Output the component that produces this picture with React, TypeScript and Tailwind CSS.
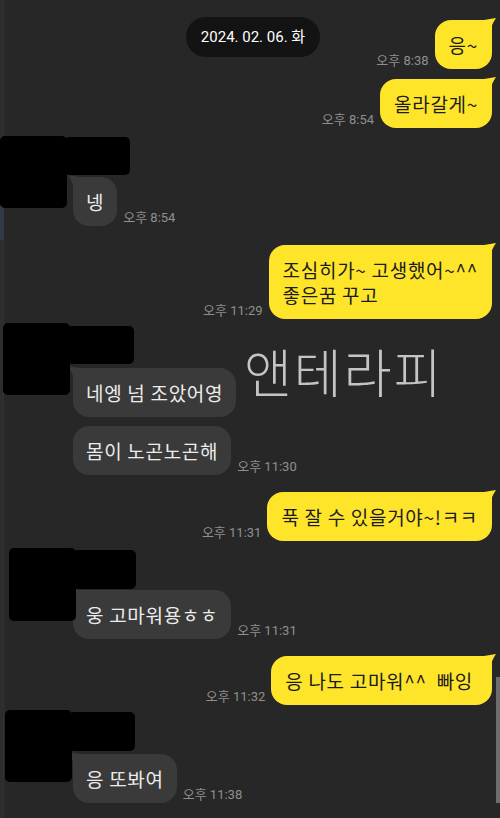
const FONT = { fontFamily: '"Noto Sans CJK KR", "Noto Sans", sans-serif' };
const TIME_FONT = { fontFamily: 'Roboto, "Noto Sans CJK KR", sans-serif' };

type Box = { x: number; y: number; w: number; h: number };

function MyTail() {
  return (
    <svg
      className="absolute -right-[4px] -top-[2px]"
      width="12"
      height="14"
      viewBox="0 0 12 14"
    >
      <path d="M0 2 L12 0 C9 4 7 9 6 14 L0 14 Z" fill="#fee52a" />
    </svg>
  );
}

function OtherTail() {
  return (
    <svg
      className="absolute -left-[5px] -top-[2px]"
      width="12"
      height="14"
      viewBox="0 0 12 14"
    >
      <path d="M12 2 L0 0 C3 4 5 9 6 14 L12 14 Z" fill="#3a3a3a" />
    </svg>
  );
}

function Time({ t }: { t: string }) {
  return (
    <span
      className="text-[13px] leading-none text-[#8f8f8f] pb-[2px] whitespace-nowrap"
      style={TIME_FONT}
    >
      {t}
    </span>
  );
}

function Mine({ lines, time, mt }: { lines: string[]; time: string; mt: string }) {
  return (
    <div className={`flex justify-end items-end gap-[6px] pr-[8px] ${mt}`}>
      <Time t={time} />
      <div className="relative rounded-[16px] rounded-tr-[6px] bg-[#fee52a] px-[14px] py-[12px] text-[19px] leading-[25px] tracking-[0.7px] text-[#1c1c1c]">
        <MyTail />
        {lines.map((l) => (
          <div key={l} className="relative whitespace-pre">
            {l}
          </div>
        ))}
      </div>
    </div>
  );
}

function Redact({ avatar, name }: { avatar: Box; name: Box }) {
  return (
    <>
      <div
        className="absolute bg-black rounded-[5px]"
        style={{ left: avatar.x, top: avatar.y, width: avatar.w, height: avatar.h }}
      />
      <div
        className="absolute bg-black rounded-[5px]"
        style={{ left: name.x, top: name.y, width: name.w, height: name.h }}
      />
    </>
  );
}

function Theirs({
  msgs,
  time,
  mt,
  avatar,
  name,
}: {
  msgs: string[];
  time: string;
  mt: string;
  avatar: Box;
  name: Box;
}) {
  return (
    <div className={`relative pl-[73px] pt-[41px] ${mt}`}>
      <div className="flex flex-col gap-[9px]">
        {msgs.map((m, i) => (
          <div key={m} className="flex items-end gap-[6px]">
            <div
              className={`relative rounded-[16px] bg-[#3a3a3a] px-[13px] py-[12px] text-[19px] leading-[25px] tracking-[0.7px] text-[#ececec] whitespace-pre ${
                i === 0 ? "rounded-tl-[6px]" : ""
              }`}
            >
              {i === 0 && <OtherTail />}
              <span className="relative">{m}</span>
            </div>
            {i === msgs.length - 1 && <Time t={time} />}
          </div>
        ))}
      </div>
      <Redact avatar={avatar} name={name} />
    </div>
  );
}

export default function App() {
  return (
    <div className="relative h-[818px] w-full overflow-hidden bg-[#272727]" style={FONT}>
      {/* left edge strip */}
      <div className="absolute left-0 top-0 h-full w-[4px] bg-[#2d2d2d] border-r border-[#323232]" />
      <div className="absolute left-0 top-[206px] h-[34px] w-[4px] bg-[#2f3a44]" />

      <div className="flex flex-col pt-[20px]">
        <Mine lines={["응~"]} time="오후 8:38" mt="" />
        <Mine lines={["올라갈게~"]} time="오후 8:54" mt="mt-[10px]" />
        <Theirs
          msgs={["넹"]}
          time="오후 8:54"
          mt="mt-[8px]"
          avatar={{ x: 0, y: 0, w: 67, h: 72 }}
          name={{ x: 64, y: 1, w: 66, h: 38 }}
        />
        <Mine
          lines={["조심히가~ 고생했어~^^", "좋은꿈 꾸고"]}
          time="오후 11:29"
          mt="mt-[19px]"
        />
        <Theirs
          msgs={["네엥 넘 조았어영", "몸이 노곤노곤해"]}
          time="오후 11:30"
          mt="mt-[8px]"
          avatar={{ x: 3, y: -4, w: 67, h: 72 }}
          name={{ x: 67, y: -1, w: 67, h: 38 }}
        />
        <Mine lines={["푹 잘 수 있을거야~!ㅋㅋ"]} time="오후 11:31" mt="mt-[17px]" />
        <Theirs
          msgs={["웅 고마워용ㅎㅎ"]}
          time="오후 11:31"
          mt="mt-[8px]"
          avatar={{ x: 9, y: -1, w: 67, h: 73 }}
          name={{ x: 73, y: 1, w: 63, h: 39 }}
        />
        <Mine lines={["응 나도 고마워^^  빠잉 "]} time="오후 11:32" mt="mt-[17px]" />
        <Theirs
          msgs={["응 또봐여"]}
          time="오후 11:38"
          mt="mt-[8px]"
          avatar={{ x: 5, y: -3, w: 67, h: 72 }}
          name={{ x: 69, y: -1, w: 66, h: 39 }}
        />
      </div>

      {/* floating date header */}
      <div
        className="absolute left-[186px] top-[17px] flex h-[40px] w-[134px] items-center justify-center rounded-full bg-[#131313] text-[15px] text-white"
        style={TIME_FONT}
      >
        2024. 02. 06. 화
      </div>

      {/* watermark */}
      <div className="pointer-events-none absolute left-[244px] top-[345px] text-[52px] font-light leading-none tracking-[2px] text-[#c4c4c4]">
        앤테라피
      </div>

      {/* scrollbar */}
      <div className="absolute right-0 top-[677px] h-[126px] w-[4px] bg-[#6d6d6d]" />
    </div>
  );
}
